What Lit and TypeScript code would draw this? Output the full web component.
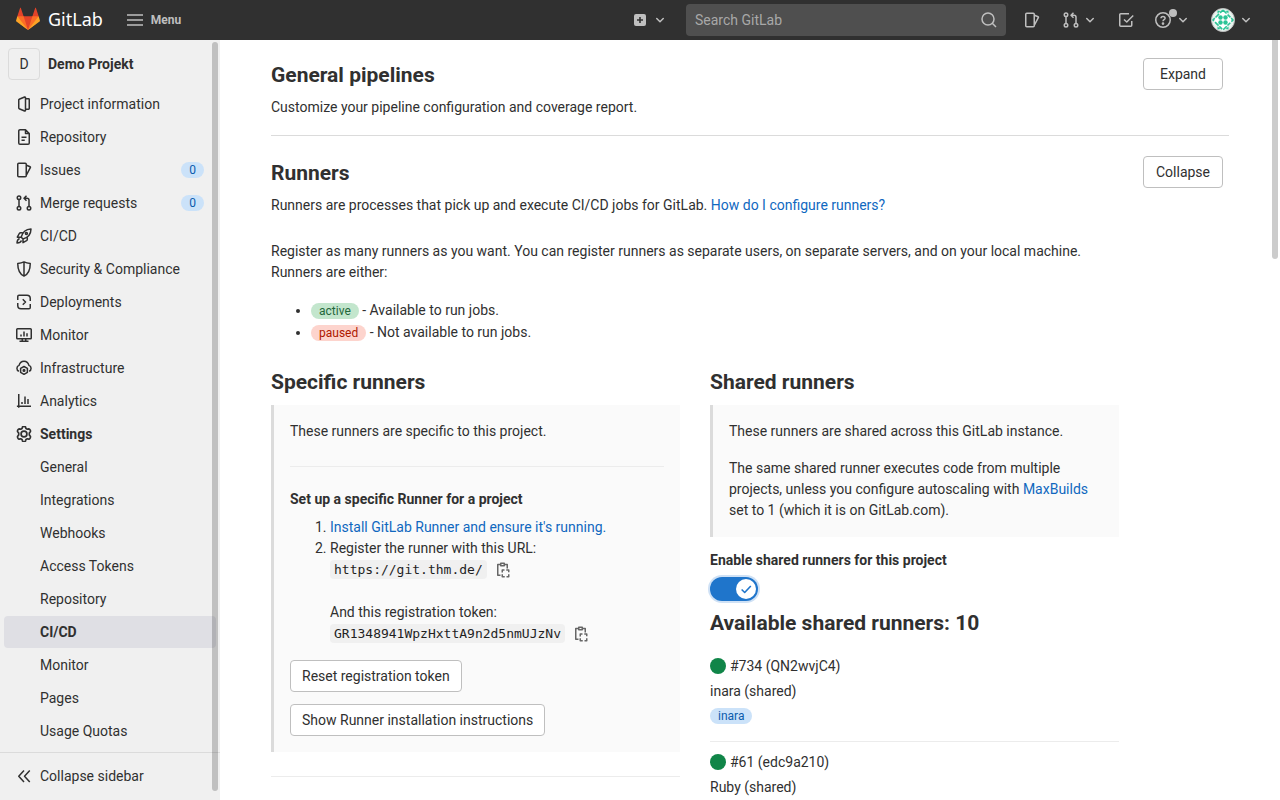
import { LitElement, html, css, svg, nothing } from "lit";
import type { SVGTemplateResult } from "lit";
import { customElement, property } from "lit/decorators.js";
import { classMap } from "lit/directives/class-map.js";

const ICONS: Record<string, SVGTemplateResult> = {
  menu: svg`<path d="M0 3H16M0 8H16M0 13H16"/>`,
  chevron: svg`<path stroke-linecap="round" d="M4.75 6.5L8 9.75l3.250-3.25"/>`,
  search: svg`<circle cx="7" cy="7" r="6"/><path d="M11.3 11.3L15 15"/>`,
  plus: svg`<path fill="currentColor" stroke="none" fill-rule="evenodd" d="M4 2a2 2 0 0 0-2 2v8a2 2 0 0 0 2 2h8a2 2 0 0 0 2-2V4a2 2 0 0 0-2-2H4zm3.2 3h1.6v2.2H11v1.6H8.8V11H7.2V8.8H5V7.2h2.200V5z"/>`,
  project: svg`<path d="M8.600 1L3.200 3.250a.7.7 0 0 0-.45.650v8.200c0 .3.180.550.450.650L8.600 15a.7.7 0 0 0 .900-.650V1.650A.7.7 0 0 0 8.600 1zM9.500 2.750h3.100c.360 0 .650.300.650.650v9.200c0 .360-.300.650-.650.650H9.500"/>`,
  document: svg`<path d="M9.500 .75H4A1.250 1.250 0 0 0 2.750 2v12c0 .7.560 1.250 1.250 1.250h8c.7 0 1.250-.560 1.250-1.250V4.500L9.500 .75zV4.500h3.750M5.500 8.250h5M5.500 11.250h3.250"/>`,
  issues: svg`<rect x="1.75" y="1.25" width="8.5" height="13.5" rx="1"/><path d="M10.500 3.250l3.600 1.500c.300.120.450.420.360.720L10.500 12.900"/>`,
  merge: svg`<circle cx="3" cy="2.750" r="1.750"/><circle cx="3" cy="13.250" r="1.750"/><circle cx="13" cy="13.250" r="1.750"/><path d="M3 4.500v7M13 11.500V5.250c0-1.100-.900-2-2-2H8.500M10.500 .75L8 3.250l2.500 2.500"/>`,
  rocket: svg`<path d="M5.200 9.200C6.200 5 9.300 1.300 15 1c-.1 5.300-3.600 8.800-8 9.900L5.200 9.200zM6.500 4.750H4.600a1.500 1.500 0 0 0-1.300.75L1.300 9.200h3.600M11.300 9.500v1.900c0 .55-.3 1-.75 1.300L7 14.700v-3.600M3.600 10.500C1.500 11.200 1.100 13 1 15c2 0 3.800-.5 4.500-2.500"/><circle cx="10.400" cy="5.600" r="1"/>`,
  shield: svg`<path d="M8 .9c1.700.9 3.700 1.400 6.250 1.500 0 6-1.300 10.300-6.250 12.700-4.950-2.400-6.250-6.700-6.250-12.700C4.300 2.300 6.300 1.800 8 .9zV15"/>`,
  deploy: svg`<path d="M1.750 6V2.500c0-.7.550-1.250 1.250-1.250h8a3.250 3.250 0 0 1 3.250 3.250V7M14.250 10v3.500c0 .7-.550 1.250-1.250 1.250H5a3.250 3.250 0 0 1-3.250-3.250V9M6.750 5.250L9.500 8 6.750 10.750"/>`,
  monitor: svg`<rect x=".75" y="1.750" width="14.500" height="10" rx=".8"/><path d="M6.250 12v2M9.750 12v2M3.500 14.250h9M5 7.500v2M8 4.500v5M11 6.250v3.250"/>`,
  cloud: svg`<path d="M2.900 11.250A3.100 3.100 0 0 1 3.100 5.400C3.700 2.800 5.600 1.250 8 1.250s4.300 1.550 4.900 4.150a3.100 3.100 0 0 1 .2 5.850"/><path d="M8 6.500l3.400 1.950v3.900L8 14.300l-3.400-1.950v-3.900z"/><circle cx="8" cy="10.400" r=".8"/>`,
  chart: svg`<path d="M2.750 1v13.750M.9 13.250H15M6 9v2M9 3.500V11M12 6v5"/>`,
  settings: svg`<g transform="translate(8 8) scale(1.12) translate(-8 -8)"><path d="M6.600 1.900c.3-.8 2.500-.8 2.800 0l.35 1.200 1.200.65 1.300-.3c.9-.1 1.900 1.800 1.400 2.500l-.9 1.200v1.700l.9 1.200c.5.7-.5 2.600-1.400 2.500l-1.300-.3-1.200.65-.35 1.200c-.3.8-2.500.8-2.800 0l-.35-1.200-1.200-.65-1.300.3c-.9.1-1.900-1.800-1.400-2.500l.9-1.200v-1.700l-.9-1.200c-.5-.7.5-2.600 1.400-2.500l1.300.3 1.200-.65z"/><circle cx="8" cy="8" r="2.600"/></g>`,
  collapse: svg`<path d="M8 2.500L2.750 8.250 8 14M13.750 2.500L8.500 8.250l5.250 5.750"/>`,
  todo: svg`<path d="M13.750 9v4.250a1 1 0 0 1-1 1h-10a1 1 0 0 1-1-1V2.750a1 1 0 0 1 1-1H11M6 7.500l2.750 2.500 6.500-6.500"/>`,
  help: svg`<circle cx="8" cy="8" r="7.250"/><path d="M6 6.200C6 5 6.900 4.400 8 4.400s2.100.7 2.100 1.800C10.100 7.700 8 7.700 8 9.300"/><circle cx="8" cy="11.600" r=".6"/>`,
  copy: svg`<path d="M5.500 2.500H2.750v10.750H5.500M9.500 2.500h2.750V6.500M5.750 1.250h3.500v2.500h-3.500z"/><path d="M7.250 10.500V8h2.250M11.250 8h2.500v2.250M13.750 12.250v2.500h-2.250M9.750 14.750h-2.500v-2.500"/>`,
  check: svg`<path stroke-width="1.800" d="M3 8.500l3.500 3.500L13.500 4.500"/>`,
};

@customElement("gl-icon")
export class GlIcon extends LitElement {
  @property() name = "";

  static styles = css`
    :host { display: inline-block; width: 16px; height: 16px; flex: none; }
    .icon {
      display: block; width: 100%; height: 100%;
      fill: none; stroke: currentColor; stroke-width: 1.5;
      stroke-linejoin: round;
    }
  `;

  render() {
    return html`<svg class="icon" viewBox="0 0 16 16" aria-hidden="true">${ICONS[this.name]}</svg>`;
  }
}

interface NavItem { label: string; icon?: string; count?: number; bold?: boolean; active?: boolean; }

const NAV: NavItem[] = [
  { label: "Project information", icon: "project" },
  { label: "Repository", icon: "document" },
  { label: "Issues", icon: "issues", count: 0 },
  { label: "Merge requests", icon: "merge", count: 0 },
  { label: "CI/CD", icon: "rocket" },
  { label: "Security & Compliance", icon: "shield" },
  { label: "Deployments", icon: "deploy" },
  { label: "Monitor", icon: "monitor" },
  { label: "Infrastructure", icon: "cloud" },
  { label: "Analytics", icon: "chart" },
  { label: "Settings", icon: "settings", bold: true },
  { label: "General" },
  { label: "Integrations" },
  { label: "Webhooks" },
  { label: "Access Tokens" },
  { label: "Repository" },
  { label: "CI/CD", bold: true, active: true },
  { label: "Monitor" },
  { label: "Pages" },
  { label: "Usage Quotas" },
];

const RUNNERS: { id: string; name: string; tag?: string }[] = [
  { id: "#734 (QN2wvjC4)", name: "inara (shared)", tag: "inara" },
  { id: "#61 (edc9a210)", name: "Ruby (shared)" },
];

@customElement("app-root")
export class AppRoot extends LitElement {
  static styles = css`
    :host {
      display: grid; grid-template: 40px minmax(0, 1fr) / 220px minmax(0, 1fr);
      height: 100vh; overflow: hidden; background: #fff; color: #303030;
      font-family: Roboto, "Noto Sans", sans-serif; font-size: 14px; line-height: 20px;
    }
    * { box-sizing: border-box; }
    a { color: #1068bf; text-decoration: none; }
    h1, h2, h3, p, ul, ol { margin: 0; }
    button { font: inherit; color: inherit; cursor: pointer; }

    .top {
      grid-column: 1 / -1; display: flex; align-items: center;
      background: #303030; color: #bfbfbf; padding: 0 26px 0 16px;
    }
    .brand { display: flex; align-items: center; gap: 8px; color: #fff; font: 400 18px/22px "Noto Sans", sans-serif; padding-bottom: 2px; }
    .logo { width: 24px; height: 24px; }
    .plain { display: flex; align-items: center; padding: 0; border: 0; background: none; color: inherit; }
    .menu { gap: 8px; margin-left: 24px; font-size: 12px; font-weight: 700; }
    .tools { display: flex; align-items: center; margin-left: auto; }
    .new { gap: 4px; margin-right: 18px; }
    .search { display: flex; align-items: center; width: 320px; height: 32px; padding: 0 9px; border-radius: 4px; background: #4f4f4f; margin-right: 18px; }
    .search-input { flex: 1; min-width: 0; padding: 0; border: 0; outline: 0; background: none; color: #fff; font: inherit; }
    .search-input::placeholder { color: #a8a8a8; opacity: 1; }
    .pair { gap: 3px; }
    .merge { margin: 0 20px 0 23px; }
    .help { position: relative; gap: 4px; margin-left: 21px; }
    .dot { position: absolute; left: 14px; top: -3px; width: 8px; height: 8px; border-radius: 50%; background: #bfbfbf; }
    .user { margin-left: 20px; }
    .avatar { width: 24px; height: 24px; }

    .side { position: relative; display: flex; flex-direction: column; min-height: 0; background: #f0f0f0; }
    .project { display: flex; align-items: center; gap: 8px; padding: 8px; color: inherit; font-weight: 700; }
    .letter { display: grid; place-items: center; width: 32px; height: 32px; border: 1px solid #dbdbdb; border-radius: 4px; font-weight: 400; }
    .nav { flex: 1; min-height: 0; overflow: hidden; list-style: none; padding: 0 4px; }
    .item { display: flex; align-items: center; gap: 8px; height: 32px; margin-bottom: 1px; padding: 0 12px; border-radius: 4px; color: inherit; }
    .sub { padding-left: 36px; }
    .bold { font-weight: 700; }
    .active { background: #dfdfe4; }
    .count { margin-left: auto; }
    .fold { gap: 8px; flex: none; height: 48px; padding: 0 16px 2px; border-top: 1px solid #dbdbdb; }
    .thumb { position: absolute; width: 6px; border-radius: 3px; background: rgba(0, 0, 0, 0.2); }
    .side-thumb { right: 2px; top: 2px; bottom: 9px; }
    .page-thumb { right: 2px; top: 0; height: 219px; border-radius: 0 0 3px 3px; }

    .main { position: relative; min-width: 0; overflow: hidden; }
    .wrap { max-width: 990px; margin: 0 auto; padding: 0 16px; }
    .section { padding: 20px 0 18px; }
    .section:first-child { padding-top: 18px; border-bottom: 1px solid #dbdbdb; }
    .head { display: flex; justify-content: space-between; align-items: flex-start; padding-right: 6px; }
    .title { font-size: 21px; line-height: 34px; margin-bottom: 5px; }
    .btn { height: 32px; padding: 0 11px; border: 1px solid #bfbfbf; border-radius: 4px; background: #fff; line-height: 16px; }
    .toggle-btn { width: 80px; padding: 0; }
    .body { margin-top: 26px; padding-right: 110px; line-height: 21px; }
    .states { margin-top: 16px; padding-left: 40px; line-height: 22px; }
    .badge { display: inline-block; padding: 0 8px; border-radius: 8px; font-size: 12px; font-weight: 400; line-height: 16px; background: #cbe2f9; color: #0b5cad; }
    .green { background: #c3e6cd; color: #24663b; }
    .red { background: #fdd4cd; color: #ae1800; }
    .cols { display: grid; grid-template-columns: 1fr 1fr; gap: 30px; margin-top: 26px; }
    .sub-title { font-size: 21px; line-height: 26px; margin-bottom: 10px; }
    .callout { padding: 16px; border-left: 3px solid #dbdbdb; background: #fafafa; }
    .callout .para + .para { margin-top: 16px; }
    .rule { height: 1px; margin: 24px 0 0; border: 0; background: #ececec; }
    .setup { margin-top: 22px; font-size: 14px; line-height: 21px; }
    .steps { margin-top: 7px; padding-left: 40px; }
    .line { display: flex; align-items: center; gap: 8px; height: 21px; }
    .gap-below { margin-bottom: 22px; }
    .code { padding: 2px 4px; border-radius: 4px; background: #f0f0f0; color: #1f1f1f; font: 13px/15px "DejaVu Sans Mono", monospace; }
    .copy { color: #666; }
    .actions { display: flex; flex-direction: column; align-items: flex-start; gap: 12px; margin-top: 16px; }
    .enable { display: block; margin-top: 13px; font-weight: 700; line-height: 20px; }
    .switch { position: relative; display: block; width: 48px; height: 24px; margin: 7px 0 9px; }
    .switch-input { appearance: none; display: block; width: 48px; height: 24px; margin: 0; border-radius: 12px; background: #1f75cb; box-shadow: 0 0 0 2px #cfe1f5; }
    .knob { position: absolute; right: 2px; top: 2px; display: grid; place-items: center; width: 20px; height: 20px; border-radius: 50%; background: #fff; color: #1f75cb; pointer-events: none; }
    .knob-icon { width: 14px; height: 14px; }
    .runner { display: grid; gap: 5px; padding: 10px 0 15px; border-bottom: 1px solid #ececec; line-height: 20px; }
    .runner-id { display: flex; align-items: center; gap: 4px; }
    .status { width: 16px; height: 16px; border-radius: 50%; background: #108548; }
    .tag-row { display: flex; align-items: center; height: 20px; }
  `;

  private logo() {
    return html`<svg class="logo" viewBox="0 0 36 36" aria-hidden="true">
      <path fill="#e24329" d="M2 14l9.380 9v-9l-4-12.280c-.205-.632-1.176-.632-1.380 0z"/>
      <path fill="#e24329" d="M34 14l-9.380 9v-9l4-12.280c.205-.632 1.176-.632 1.380 0z"/>
      <path fill="#e24329" d="M18 34.380L3 14h30z"/>
      <path fill="#fc6d26" d="M18 34.380L11.380 14H2l4 11z"/>
      <path fill="#fc6d26" d="M18 34.380L24.620 14H34l-4 11z"/>
      <path fill="#fca326" d="M2 14L.1 20.160c-.18.565 0 1.200.5 1.560l17.420 12.660z"/>
      <path fill="#fca326" d="M34 14l1.900 6.160c.18.565 0 1.200-.5 1.560L18 34.380z"/>
    </svg>`;
  }

  private avatar() {
    return html`<svg class="avatar" viewBox="0 0 24 24" aria-hidden="true">
      <circle cx="12" cy="12" r="11.500" fill="#e9f3ef"/>
      <path fill="#fff" stroke="#2bc496" stroke-width="1.600" stroke-dasharray="5 1.500 4 1" d="M12 2l10 10-10 10L2 12z"/>
      <g fill="#2bc496">
        <circle cx="9.500" cy="9.500" r="2.200"/><circle cx="14.500" cy="9.500" r="2.200"/>
        <circle cx="9.500" cy="14.500" r="2.200"/><circle cx="14.500" cy="14.500" r="2.200"/>
        <path d="M6.500 2.500l3 .5-3 2.500zM17.500 2.500l-3 .5 3 2.500zM6.500 21.500l3-.5-3-2.500zM17.500 21.500l-3-.5 3-2.500z"/>
      </g>
      <circle cx="12" cy="12" r="11.500" fill="none" stroke="#bfbfbf"/>
    </svg>`;
  }

  private navItem(n: NavItem) {
    return html`<li>
      <a href="#" class=${classMap({ item: true, sub: !n.icon, bold: !!n.bold, active: !!n.active })}>
        ${n.icon ? html`<gl-icon name=${n.icon}></gl-icon>` : nothing}
        <span>${n.label}</span>
        ${n.count !== undefined ? html`<span class="badge count">${n.count}</span>` : nothing}
      </a>
    </li>`;
  }

  render() {
    return html`
      <header class="top">
        <a class="brand" href="#">${this.logo()}<span>GitLab</span></a>
        <button class="plain menu"><gl-icon name="menu"></gl-icon>Menu</button>
        <div class="tools">
          <button class="plain new" aria-label="Create new"><gl-icon name="plus"></gl-icon><gl-icon name="chevron"></gl-icon></button>
          <label class="search">
            <input class="search-input" type="text" placeholder="Search GitLab" aria-label="Search GitLab" />
            <gl-icon name="search"></gl-icon>
          </label>
          <button class="plain" aria-label="Issues"><gl-icon name="issues"></gl-icon></button>
          <button class="plain pair merge" aria-label="Merge requests"><gl-icon name="merge"></gl-icon><gl-icon name="chevron"></gl-icon></button>
          <button class="plain" aria-label="To-Do List"><gl-icon name="todo"></gl-icon></button>
          <button class="plain help" aria-label="Help"><gl-icon name="help"></gl-icon><gl-icon name="chevron"></gl-icon><span class="dot"></span></button>
          <button class="plain pair user" aria-label="User menu">${this.avatar()}<gl-icon name="chevron"></gl-icon></button>
        </div>
      </header>

      <aside class="side">
        <a class="project" href="#"><span class="letter">D</span><span>Demo Projekt</span></a>
        <ul class="nav">${NAV.map((n) => this.navItem(n))}</ul>
        <button class="plain fold"><gl-icon name="collapse"></gl-icon>Collapse sidebar</button>
        <div class="thumb side-thumb"></div>
      </aside>

      <main class="main">
        <div class="wrap">
          <section class="section">
            <div class="head"><h2 class="title">General pipelines</h2><button class="btn toggle-btn">Expand</button></div>
            <p>Customize your pipeline configuration and coverage report.</p>
          </section>
          <section class="section">
            <div class="head"><h2 class="title">Runners</h2><button class="btn toggle-btn">Collapse</button></div>
            <p>Runners are processes that pick up and execute CI/CD jobs for GitLab. <a href="#">How do I configure runners?</a></p>
            <div class="body">
              <p>Register as many runners as you want. You can register runners as separate users, on separate servers, and on your local machine. Runners are either:</p>
              <ul class="states">
                <li><span class="badge green">active</span> - Available to run jobs.</li>
                <li><span class="badge red">paused</span> - Not available to run jobs.</li>
              </ul>
              <div class="cols">
                <div>
                  <h3 class="sub-title">Specific runners</h3>
                  <div class="callout">
                    <p>These runners are specific to this project.</p>
                    <hr class="rule" />
                    <h3 class="setup">Set up a specific Runner for a project</h3>
                    <ol class="steps">
                      <li><a href="#">Install GitLab Runner and ensure it's running.</a></li>
                      <li>Register the runner with this URL:
                        <div class="line gap-below"><code class="code">https://git.thm.de/</code><button class="plain copy" aria-label="Copy URL"><gl-icon name="copy"></gl-icon></button></div>
                        And this registration token:
                        <div class="line"><code class="code">GR1348941WpzHxttA9n2d5nmUJzNv</code><button class="plain copy" aria-label="Copy token"><gl-icon name="copy"></gl-icon></button></div>
                      </li>
                    </ol>
                    <div class="actions">
                      <button class="btn">Reset registration token</button>
                      <button class="btn">Show Runner installation instructions</button>
                    </div>
                  </div>
                  <hr class="rule" />
                </div>
                <div>
                  <h3 class="sub-title">Shared runners</h3>
                  <div class="callout">
                    <p class="para">These runners are shared across this GitLab instance.</p>
                    <p class="para">The same shared runner executes code from multiple projects, unless you configure autoscaling with <a href="#">MaxBuilds</a> set to 1 (which it is on GitLab.com).</p>
                  </div>
                  <label class="enable" for="shared">Enable shared runners for this project</label>
                  <span class="switch">
                    <input class="switch-input" id="shared" type="checkbox" role="switch" checked />
                    <span class="knob"><gl-icon class="knob-icon" name="check"></gl-icon></span>
                  </span>
                  <h3 class="sub-title">Available shared runners: 10</h3>
                  ${RUNNERS.map((r) => html`<div class="runner">
                    <div class="runner-id"><span class="status"></span>${r.id}</div>
                    <div>${r.name}</div>
                    ${r.tag ? html`<div class="tag-row"><span class="badge">${r.tag}</span></div>` : nothing}
                  </div>`)}
                </div>
              </div>
            </div>
          </section>
        </div>
        <div class="thumb page-thumb"></div>
      </main>
    `;
  }
}
